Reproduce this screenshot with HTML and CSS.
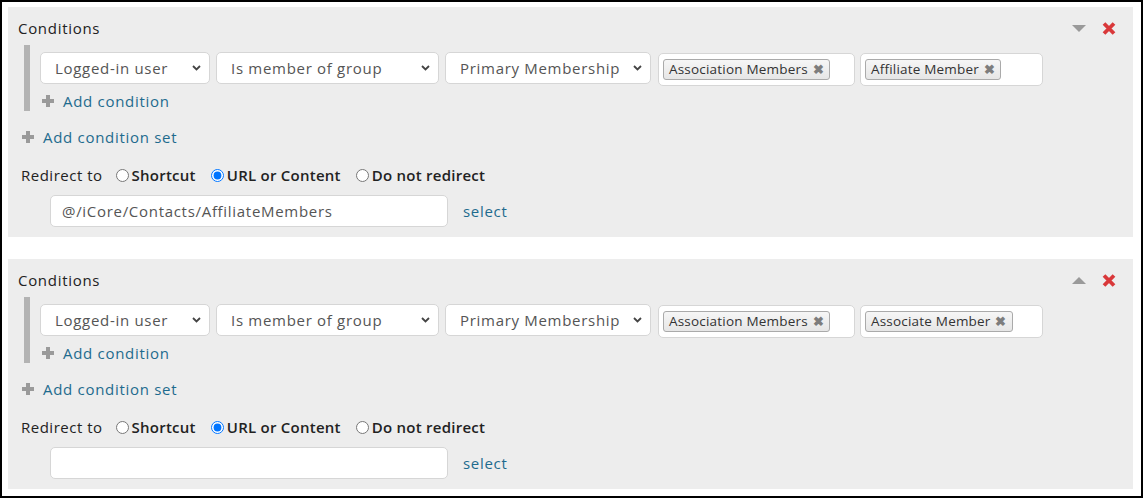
FILE: index.html
```html
<!DOCTYPE html>
<html lang="en">
<head>
    <meta charset="UTF-8">
    <title>Redirect rules</title>
    <link rel="stylesheet" href="styles.css">
</head>
<body>
<div class="frame">

    <!-- rule 1 -->
    <div class="rule">
        <div class="rule-head">
            <span class="rule-title">Conditions</span>
            <div class="rule-tools">
                <svg class="arrow" width="14" height="8" viewBox="0 0 14 8"><path d="M0 0H14L7 7Z" fill="#9a9a9a"/></svg>
                <svg class="remove" width="14" height="13" viewBox="0 0 14 13"><path d="M2 1.5L12 11.5M12 1.5L2 11.5" stroke="#d9383a" stroke-width="3.8"/></svg>
            </div>
        </div>

        <div class="cond-set">
            <div class="cond-row">
                <div class="select w1">Logged-in user<svg width="9" height="6" viewBox="0 0 9 6"><path d="M1 1L4.5 4.5L8 1" fill="none" stroke="#444" stroke-width="1.8"/></svg></div>
                <div class="select w2">Is member of group<svg width="9" height="6" viewBox="0 0 9 6"><path d="M1 1L4.5 4.5L8 1" fill="none" stroke="#444" stroke-width="1.8"/></svg></div>
                <div class="select w3">Primary Membership<svg width="9" height="6" viewBox="0 0 9 6"><path d="M1 1L4.5 4.5L8 1" fill="none" stroke="#444" stroke-width="1.8"/></svg></div>
                <div class="tags t1"><span class="chip">Association Members <b>&#10006;</b></span></div>
                <div class="tags t2"><span class="chip">Affiliate Member <b>&#10006;</b></span></div>
            </div>
            <a class="add add-cond"><i class="plus"></i>Add condition</a>
        </div>

        <a class="add add-set"><i class="plus"></i>Add condition set</a>

        <div class="redirect">
            <span class="redirect-label">Redirect to</span>
            <label><input type="radio" name="r1">Shortcut</label>
            <label><input type="radio" name="r1" checked>URL or Content</label>
            <label><input type="radio" name="r1">Do not redirect</label>
        </div>

        <div class="target">
            <input class="url" type="text" value="@/iCore/Contacts/AffiliateMembers">
            <a class="pick">select</a>
        </div>
    </div>

    <!-- rule 2 -->
    <div class="rule">
        <div class="rule-head">
            <span class="rule-title">Conditions</span>
            <div class="rule-tools">
                <svg class="arrow" width="14" height="8" viewBox="0 0 14 8"><path d="M0 7H14L7 0Z" fill="#9a9a9a"/></svg>
                <svg class="remove" width="14" height="13" viewBox="0 0 14 13"><path d="M2 1.5L12 11.5M12 1.5L2 11.5" stroke="#d9383a" stroke-width="3.8"/></svg>
            </div>
        </div>

        <div class="cond-set">
            <div class="cond-row">
                <div class="select w1">Logged-in user<svg width="9" height="6" viewBox="0 0 9 6"><path d="M1 1L4.5 4.5L8 1" fill="none" stroke="#444" stroke-width="1.8"/></svg></div>
                <div class="select w2">Is member of group<svg width="9" height="6" viewBox="0 0 9 6"><path d="M1 1L4.5 4.5L8 1" fill="none" stroke="#444" stroke-width="1.8"/></svg></div>
                <div class="select w3">Primary Membership<svg width="9" height="6" viewBox="0 0 9 6"><path d="M1 1L4.5 4.5L8 1" fill="none" stroke="#444" stroke-width="1.8"/></svg></div>
                <div class="tags t1"><span class="chip">Association Members <b>&#10006;</b></span></div>
                <div class="tags t2"><span class="chip">Associate Member <b>&#10006;</b></span></div>
            </div>
            <a class="add add-cond"><i class="plus"></i>Add condition</a>
        </div>

        <a class="add add-set"><i class="plus"></i>Add condition set</a>

        <div class="redirect">
            <span class="redirect-label">Redirect to</span>
            <label><input type="radio" name="r2">Shortcut</label>
            <label><input type="radio" name="r2" checked>URL or Content</label>
            <label><input type="radio" name="r2">Do not redirect</label>
        </div>

        <div class="target">
            <input class="url" type="text" value="">
            <a class="pick">select</a>
        </div>
    </div>

</div>
</body>
</html>
```

FILE: styles.css
```css
* {
    box-sizing: border-box;
}

body {
    margin: 0;
    font-family: 'Open Sans', sans-serif;
    letter-spacing: 0.7px;
    color: #222;
}

.frame {
    height: 100vh;
    border: 2px solid #000;
    padding: 5px 8px 7px 6px;
    display: flex;
    flex-direction: column;
    gap: 22px;
}

/* one redirect rule */
.rule {
    background: #ededed;
    padding: 11px 10px 10px 10px;
    height: 230px;
}

.rule-head {
    display: flex;
    justify-content: space-between;
    align-items: center;
    height: 20px;
}

.rule-title {
    font-size: 15px;
    font-weight: 500;
}

.rule-tools {
    display: flex;
    align-items: center;
    gap: 16px;
    padding-right: 7px;
    margin-top: 1px;
}

/* condition set with grey bar */
.cond-set {
    margin: 7px 0 0 6px;
    border-left: 6px solid #b3b3b3;
    padding: 7px 0 0 10px;
}

.cond-row {
    display: flex;
    gap: 6px;
}

.select {
    height: 32px;
    background: #fff;
    border: 1px solid #d6d6d6;
    border-radius: 5px;
    padding: 0 8px 0 14px;
    display: flex;
    align-items: center;
    justify-content: space-between;
    font-size: 15px;
    color: #555;
}
.w1 { width: 170px; }
.w2 { width: 223px; }
.w3 { width: 206px; }

.tags {
    height: 33px;
    margin-top: 1px;
    background: #fff;
    border: 1px solid #d6d6d6;
    border-radius: 5px;
    padding: 3px 4px;
}
.t1 { width: 197px; margin-left: 1px; }
.t2 { width: 183px; margin-left: -1px; }

.chip {
    display: inline-flex;
    align-items: center;
    height: 21px;
    padding: 0 5px;
    border: 1px solid #aaa;
    border-radius: 3px;
    background: linear-gradient(#f6f6f6, #e6e6e6);
    font-size: 13.5px;
    letter-spacing: 0.2px;
    color: #333;
    white-space: pre;
}
.chip b {
    font-size: 12.5px;
    color: #7d7d7d;
    margin-left: 1px;
}

/* add links */
.add {
    display: flex;
    align-items: center;
    height: 20px;
    font-size: 15px;
    color: #1e6b8e;
}

.plus {
    position: relative;
    width: 12px;
    height: 12px;
    margin-right: 9px;
}
.plus::before,
.plus::after {
    content: '';
    position: absolute;
    background: #9a9a9a;
}
.plus::before { left: 4px; top: 0; width: 4px; height: 12px; }
.plus::after { left: 0; top: 4px; width: 12px; height: 4px; }

.add-cond {
    margin: 5px 0 0 2px;
}

.add-set {
    margin: 16px 0 0 4px;
}

/* redirect choice */
.redirect {
    display: flex;
    align-items: center;
    height: 20px;
    margin: 18px 0 0 3px;
    font-size: 15px;
}

.redirect-label {
    font-weight: 500;
    letter-spacing: 0.5px;
    margin-right: 13px;
}

.redirect label {
    display: flex;
    align-items: center;
    font-weight: 600;
    letter-spacing: 0.25px;
    margin-right: 15px;
}

.redirect input {
    margin: 0 3px 0 0;
    width: 13px;
    height: 13px;
}

.target {
    display: flex;
    align-items: center;
    margin: 10px 0 0 32px;
}

.url {
    width: 398px;
    height: 32px;
    border: 1px solid #d6d6d6;
    border-radius: 5px;
    padding: 0 11px;
    font-family: inherit;
    font-size: 15px;
    letter-spacing: 0.7px;
    color: #555;
    outline: none;
}

.pick {
    margin-left: 15px;
    font-size: 15px;
    color: #1e6b8e;
}
```
